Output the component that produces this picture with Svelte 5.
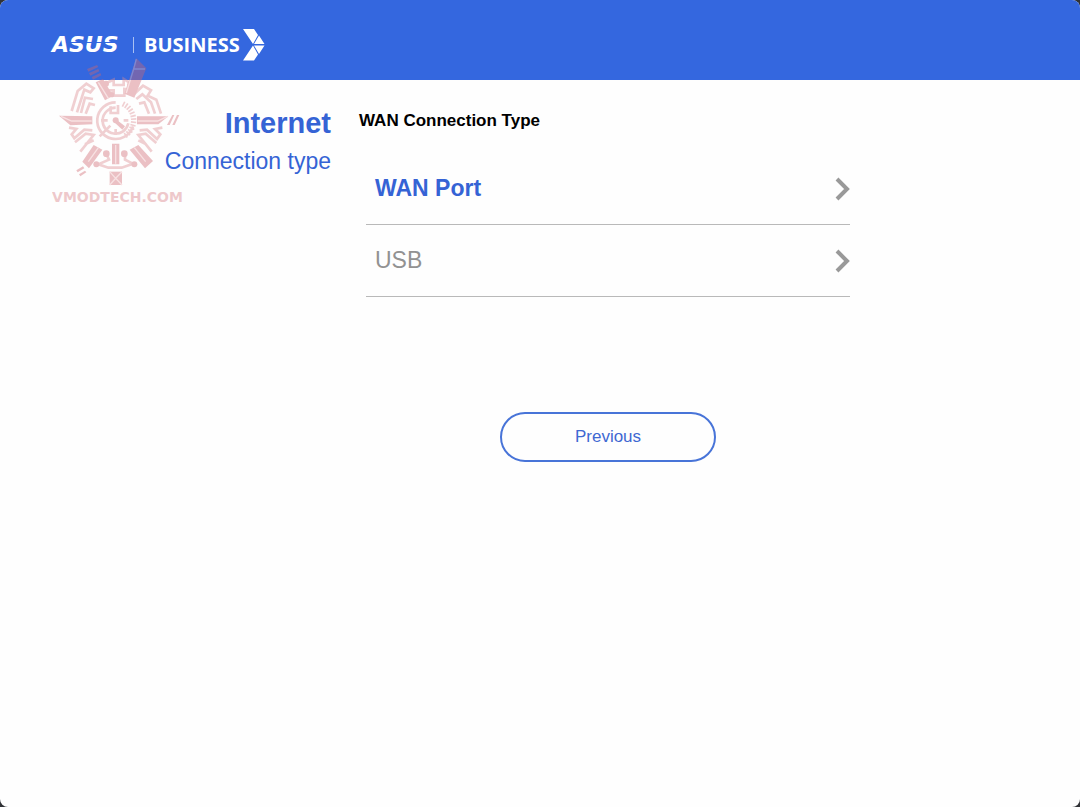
<script>
  const ports = [
    { name: 'WAN Port', active: true },
    { name: 'USB', active: false }
  ];
  const ticks = Array.from({ length: 13 }, (_, i) => -64 + i * 10);
</script>

<div class="page">
  <header>
    <span class="asus">ASUS</span>
    <span class="rule"></span>
    <span class="business">BUSINESS</span>
    <svg class="mark" viewBox="0 0 22 32" aria-hidden="true">
      <path d="M0 0H11L15 6L10 15ZM16 6.500L21.500 15H11ZM11 16.500H21.500L16 25ZM10 16.500L15 25.500L11 31.500H0Z" />
    </svg>
  </header>

  <main>
    <div class="titles">
      <h1>Internet</h1>
      <p>Connection type</p>
    </div>
    <section>
      <h2>WAN Connection Type</h2>
      <ul>
        {#each ports as port}
          <li>
            <button class="port" class:active={port.active}>
              <span>{port.name}</span>
              <svg viewBox="0 0 16 24" aria-hidden="true"><path d="M3 2L13 12L3 22" /></svg>
            </button>
          </li>
        {/each}
      </ul>
      <button class="previous">Previous</button>
    </section>
  </main>

  <div class="watermark">
    <svg viewBox="0 0 435 345" aria-hidden="true">
      <g class="line">
        <path d="M212 142A55 55 0 1 0 264 214" />
        <path d="M212 158A39 39 0 1 0 250 205M164 244L196 212" />
        <path d="M197 154V174H219V150" />
        <path d="M168 196H188M212 222V240M236 196H250" />
        <path d="M80 168L98 108L124 86L146 100L136 112L118 104L96 172M108 174L120 128L144 132M122 176L134 146L150 150" />
        <path d="M262 122L294 92L318 106L308 122L334 134L348 176M274 132L292 118L318 142L330 176M282 146L298 142L312 176" />
        <path d="M72 218L94 222L80 238L88 250L118 224L142 226M90 262L122 236L146 240L106 290M120 268L146 256" />
        <path d="M352 218L330 222L346 238L336 252L306 224L284 226M334 264L302 236L280 240L320 290M304 268L280 256" />
        <path d="M184 84L206 74V90H236V72L258 86M190 106H206V122H238V102L254 104" />
        <path d="M184 296L192 314L160 328L190 338H230L264 326L240 314V296" />
      </g>
      <g class="teeth">
        {#each ticks as angle}
          <path d="M258 196H274" transform={`rotate(${angle} 212 196)`} />
        {/each}
      </g>
      <g class="solid">
        <path d="M274 10L304 40L268 128L238 116ZM152 82L174 72L204 122L180 136ZM42 182L142 184V208L76 211ZM276 184L370 184L340 208H276ZM146 270L172 284L132 340L112 320ZM280 270L254 284L300 340L324 318ZM201 266H223V328H201Z" />
        <path d="M194 350H231V390H194Z" />
        <path d="M126 42L156 30L160 36L130 50ZM132 54L160 42L163 49L136 62ZM140 66L166 54L169 61L144 74ZM366 210L382 180H388L374 210ZM382 210L396 180H403L389 210ZM94 346L114 334L118 340L98 352ZM102 358L120 347L124 352L106 364Z" />
        <path d="M212 192L240 214L232 224L208 202Z" />
        <circle cx="212" cy="196" r="9" /><circle cx="183" cy="86" r="9" />
        <circle cx="255" cy="88" r="8" /><circle cx="200" cy="119" r="8" />
        <circle cx="184" cy="296" r="10" /><circle cx="238" cy="296" r="10" />
        <circle cx="154" cy="328" r="9" /><circle cx="268" cy="328" r="9" />
      </g>
      <path class="facet" d="M274 12L266 42L300 42M266 42L244 114M48 184L80 198H140M368 184L338 198H278M194 350L212 370L231 350M194 390L212 370L231 390M160 82L190 130M130 320L160 278M302 320L268 278M212 270V326" />
    </svg>
    <span>VMODTECH.COM</span>
  </div>
</div>

<style>
  :global(body) {
    margin: 0;
    background: #303236;
  }
  .page {
    position: relative;
    min-height: 100vh;
    overflow: hidden;
    border-radius: 8px;
    background: #fefefe;
    font-family: "Liberation Sans", Arial, sans-serif;
  }
  header {
    display: flex;
    align-items: center;
    box-sizing: border-box;
    height: 80px;
    padding: 10px 52px 0;
    background: #3467df;
    color: #fff;
  }
  .asus {
    position: relative;
    width: 72px;
    font: italic bold 22px/24px "DejaVu Sans", sans-serif;
  }
  .asus::after {
    content: "";
    position: absolute;
    inset: 9px 0 auto 14px;
    height: 1px;
    background: #3467df;
  }
  .rule {
    width: 1px;
    height: 16px;
    margin: 0 10px 0 9px;
    background: #a9c0f3;
  }
  .business {
    font: bold 20px/24px "Open Sans", sans-serif;
  }
  .mark {
    width: 22px;
    height: 32px;
    margin-left: 3px;
    fill: #fff;
  }
  main {
    display: grid;
    grid-template-columns: 331px minmax(0, 498px);
    column-gap: 28px;
    padding-top: 24px;
  }
  h1, h2, p, ul {
    margin: 0;
    padding: 0;
  }
  .titles {
    color: #3563d5;
    text-align: right;
  }
  h1 {
    font-size: 29px;
    line-height: 38px;
  }
  p {
    font-size: 23px;
    line-height: 38px;
  }
  h2 {
    color: #000;
    font-size: 17px;
    line-height: 34px;
  }
  ul {
    margin: 15px 7px 0;
    list-style: none;
  }
  li {
    border-bottom: 1px solid #b9b9b9;
  }
  button {
    font-family: inherit;
    background: none;
    cursor: pointer;
  }
  .port {
    display: flex;
    align-items: center;
    justify-content: space-between;
    width: 100%;
    height: 71px;
    padding: 0 0 0 9px;
    border: 0;
    color: #929292;
    font-size: 23px;
  }
  .port.active {
    color: #3563d5;
    font-weight: bold;
  }
  .port svg {
    width: 16px;
    height: 24px;
    fill: none;
    stroke: #999;
    stroke-width: 4;
  }
  .previous {
    display: block;
    width: 216px;
    height: 50px;
    margin: 115px auto 0;
    border: 2px solid #4874d8;
    border-radius: 25px;
    color: #3f68d2;
    font-size: 17px;
  }
  .watermark {
    position: absolute;
    top: 55px;
    left: 45px;
    width: 145px;
    opacity: 0.4;
    text-align: center;
    pointer-events: none;
  }
  .watermark svg {
    display: block;
    width: 100%;
    overflow: visible;
  }
  .watermark span {
    display: block;
    margin-top: 18px;
    color: #d77a80;
    font: bold 14px/18px "DejaVu Sans", sans-serif;
  }
  .solid {
    fill: #d0666e;
  }
  .line {
    fill: none;
    stroke: #dc8a90;
    stroke-width: 8;
  }
  .teeth {
    stroke: #dc8a90;
    stroke-width: 5;
  }
  .facet {
    fill: none;
    stroke: #efb8bb;
    stroke-width: 4;
  }
</style>
